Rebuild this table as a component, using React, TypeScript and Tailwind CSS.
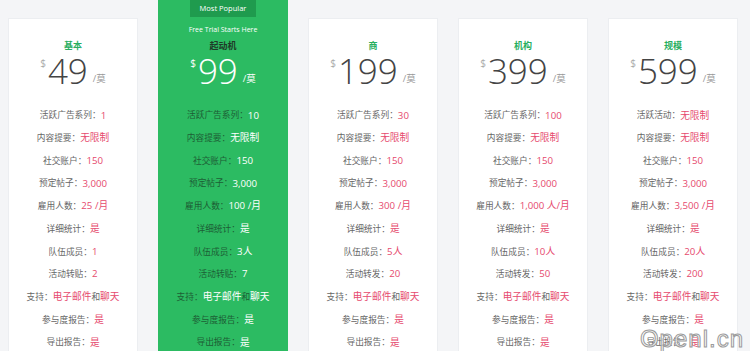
const rowLabels = ['活跃广告系列', '内容提要', '社交账户', '预定帖子', '雇用人数', '详细统计', '队伍成员']

type Plan = {
  name: string
  price: string
  first?: string
  values: string[]
  share: string
  popular?: boolean
}

const plans: Plan[] = [
  { name: '基本', price: '49', values: ['1', '无限制', '150', '3,000', '25 /月', '是', '1', '2'], share: '活动转贴' },
  { name: '起动机', price: '99', values: ['10', '无限制', '150', '3,000', '100 /月', '是', '3人', '7'], share: '活动转贴', popular: true },
  { name: '商', price: '199', values: ['30', '无限制', '150', '3,000', '300 /月', '是', '5人', '20'], share: '活动转发' },
  { name: '机构', price: '399', values: ['100', '无限制', '150', '3,000', '1,000 人/月', '是', '10人', '50'], share: '活动转发' },
  { name: '规模', price: '599', first: '活跃活动', values: ['无限制', '无限制', '150', '3,000', '3,500 /月', '是', '20人', '200'], share: '活动转发' },
]

function Row({ label, children, popular }: { label: string; children: React.ReactNode; popular?: boolean }) {
  return (
    <div className="flex h-[22.7px] items-center justify-center whitespace-nowrap">
      <span className={`text-[8.7px] ${popular ? 'text-[#1d5e35]' : 'text-[#666]'}`}>{label}：</span>
      <span className={`text-[9.7px] ${popular ? 'text-white' : 'text-[#e64a6e]'}`}>{children}</span>
    </div>
  )
}

function Card({ plan }: { plan: Plan }) {
  const p = plan.popular
  const val = p ? 'text-white' : 'text-[#e64a6e]'
  const labels = [plan.first ?? rowLabels[0], ...rowLabels.slice(1), plan.share]
  return (
    <div
      className={`flex w-[130px] shrink-0 flex-col items-center ${
        p ? 'h-[400px] bg-[#2cbb62]' : 'mt-[18px] h-[400px] border border-[#eceef1] bg-white pt-[20px]'
      }`}
    >
      {p && (
        <>
          <div className="flex h-[17px] w-[66px] items-center justify-center bg-[#1f9b4e] text-[7.5px] text-white">Most Popular</div>
          <div className="mt-[6px] h-[14px] text-[7px] leading-[14px] text-white">Free Trial Starts Here</div>
        </>
      )}
      <div className={`h-[14px] text-[9px] font-bold leading-[14px] ${p ? 'mt-[2px] text-[#1f3a28]' : 'text-[#27ae60]'}`}>
        {plan.name}
      </div>
      <div className={`flex h-[30px] items-start ${p ? 'mt-[3px] text-white' : 'mt-[3px] text-[#444]'}`}>
        <span className={`mt-[1px] mr-[2px] text-[10px] leading-[12px] ${p ? 'text-white' : 'text-[#aaa]'}`}>$</span>
        <span className="text-[35px] font-light leading-[30px]">{plan.price}</span>
        <span className={`mt-[17px] ml-[5px] text-[9.5px] leading-[12px] ${p ? 'text-white' : 'text-[#999]'}`}>/莫</span>
      </div>
      <div className="mt-[18.6px] w-full">
        {labels.map((l, i) => (
          <Row key={l} label={l} popular={p}>
            {plan.values[i]}
          </Row>
        ))}
        <div className="flex h-[22.7px] items-center justify-center whitespace-nowrap">
          <span className={`text-[8.7px] ${p ? 'text-[#1d5e35]' : 'text-[#666]'}`}>支持：</span>
          <span className={`text-[9.7px] ${val}`}>电子邮件</span>
          <span className={`text-[8.7px] ${p ? 'text-[#1d5e35]' : 'text-[#666]'}`}>和</span>
          <span className={`text-[9.7px] ${val}`}>聊天</span>
        </div>
        <Row label="参与度报告" popular={p}>是</Row>
        <Row label="导出报告" popular={p}>是</Row>
      </div>
    </div>
  )
}

export default function App() {
  return (
    <div
      className="relative h-[351px] w-[750px] overflow-hidden bg-[#f4f5f7]"
      style={{ fontFamily: "'Open Sans', 'Noto Sans CJK SC', sans-serif" }}
    >
      <div className="flex items-start gap-[20px] pl-[8px]">
        {plans.map((p) => (
          <Card key={p.name} plan={p} />
        ))}
      </div>
      <div className="absolute right-[6px] bottom-[-2px] font-['Liberation_Sans',sans-serif] text-[24px] leading-[28px] tracking-[1px] text-white/70 [-webkit-text-stroke:1px_#9a9a9a]">
        Openl.cn
      </div>
    </div>
  )
}
